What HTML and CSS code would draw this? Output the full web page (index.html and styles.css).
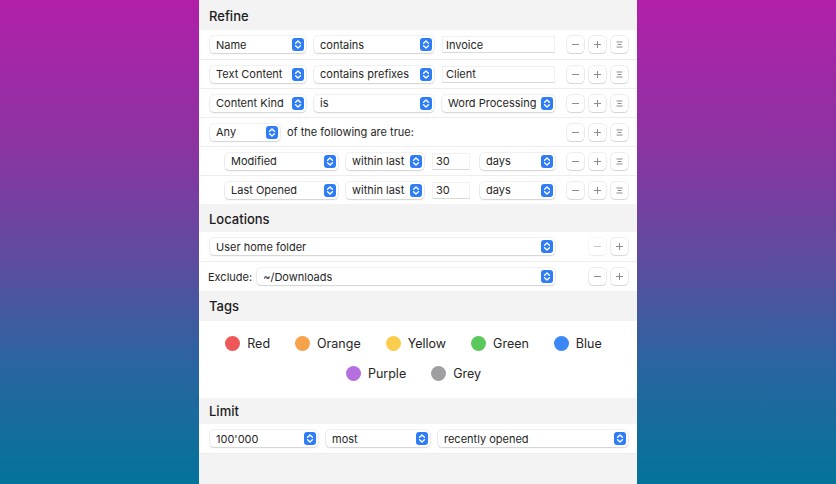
FILE: index.html
```html
<!DOCTYPE html>
<html>
<head>
<meta charset="utf-8">
<link rel="stylesheet" href="styles.css">
</head>
<body>
<svg width="0" height="0" class="defs">
  <defs>
    <symbol id="step" viewBox="0 0 12 13">
      <rect x="0" y="0" width="12" height="13" rx="3" fill="#2f7df6"/>
      <path d="M3.6 5.2 L6 2.9 L8.4 5.2 M3.6 7.8 L6 10.1 L8.4 7.8" fill="none" stroke="#fff" stroke-width="1.4" stroke-linecap="round" stroke-linejoin="round"/>
    </symbol>
    <symbol id="minus" viewBox="0 0 17 17"><path d="M5 8.5 H12" stroke="#8c8c8c" stroke-width="1"/></symbol>
    <symbol id="plus" viewBox="0 0 17 17"><path d="M5 8.5 H12 M8.5 5 V12" stroke="#8c8c8c" stroke-width="1"/></symbol>
    <symbol id="menu" viewBox="0 0 17 17"><path d="M5.5 6 H11.5 M6.5 8.5 H10.5 M5.5 11 H11.5" stroke="#8c8c8c" stroke-width="1"/></symbol>
  </defs>
</svg>
<div class="panel">
  <div class="head">Refine</div>
  <div class="row">
    <div class="fields">
      <div class="popup w96"><span>Name</span><svg class="st"><use href="#step"/></svg></div>
      <div class="popup w120"><span>contains</span><svg class="st"><use href="#step"/></svg></div>
      <div class="field w113">Invoice</div>
    </div>
    <div class="btns"><div class="btn"><svg><use href="#minus"/></svg></div><div class="btn"><svg><use href="#plus"/></svg></div><div class="btn"><svg><use href="#menu"/></svg></div></div>
  </div>
  <div class="row">
    <div class="fields">
      <div class="popup w96"><span>Text Content</span><svg class="st"><use href="#step"/></svg></div>
      <div class="popup w120"><span>contains prefixes</span><svg class="st"><use href="#step"/></svg></div>
      <div class="field w113">Client</div>
    </div>
    <div class="btns"><div class="btn"><svg><use href="#minus"/></svg></div><div class="btn"><svg><use href="#plus"/></svg></div><div class="btn"><svg><use href="#menu"/></svg></div></div>
  </div>
  <div class="row">
    <div class="fields">
      <div class="popup w96"><span>Content Kind</span><svg class="st"><use href="#step"/></svg></div>
      <div class="popup w120"><span>is</span><svg class="st"><use href="#step"/></svg></div>
      <div class="popup w113"><span>Word Processing</span><svg class="st"><use href="#step"/></svg></div>
    </div>
    <div class="btns"><div class="btn"><svg><use href="#minus"/></svg></div><div class="btn"><svg><use href="#plus"/></svg></div><div class="btn"><svg><use href="#menu"/></svg></div></div>
  </div>
  <div class="row">
    <div class="fields">
      <div class="popup w70"><span>Any</span><svg class="st"><use href="#step"/></svg></div>
      <span class="label">of the following are true:</span>
    </div>
    <div class="btns"><div class="btn"><svg><use href="#minus"/></svg></div><div class="btn"><svg><use href="#plus"/></svg></div><div class="btn"><svg><use href="#menu"/></svg></div></div>
  </div>
  <div class="row">
    <div class="fields sub">
      <div class="popup w113"><span>Modified</span><svg class="st"><use href="#step"/></svg></div>
      <div class="popup w78"><span>within last</span><svg class="st"><use href="#step"/></svg></div>
      <div class="field w38">30</div>
      <div class="popup w75 ml2"><span>days</span><svg class="st"><use href="#step"/></svg></div>
    </div>
    <div class="btns"><div class="btn"><svg><use href="#minus"/></svg></div><div class="btn"><svg><use href="#plus"/></svg></div><div class="btn"><svg><use href="#menu"/></svg></div></div>
  </div>
  <div class="row">
    <div class="fields sub">
      <div class="popup w113"><span>Last Opened</span><svg class="st"><use href="#step"/></svg></div>
      <div class="popup w78"><span>within last</span><svg class="st"><use href="#step"/></svg></div>
      <div class="field w38">30</div>
      <div class="popup w75 ml2"><span>days</span><svg class="st"><use href="#step"/></svg></div>
    </div>
    <div class="btns"><div class="btn"><svg><use href="#minus"/></svg></div><div class="btn"><svg><use href="#plus"/></svg></div><div class="btn"><svg><use href="#menu"/></svg></div></div>
  </div>

  <div class="head h28">Locations</div>
  <div class="row">
    <div class="fields">
      <div class="popup grow"><span>User home folder</span><svg class="st"><use href="#step"/></svg></div>
    </div>
    <div class="btns"><div class="btn off"><svg><use href="#minus"/></svg></div><div class="btn"><svg><use href="#plus"/></svg></div></div>
  </div>
  <div class="row r30">
    <div class="fields tight">
      <span class="label ex">Exclude:</span>
      <div class="popup grow"><span>~/Downloads</span><svg class="st"><use href="#step"/></svg></div>
    </div>
    <div class="btns"><div class="btn"><svg><use href="#minus"/></svg></div><div class="btn"><svg><use href="#plus"/></svg></div></div>
  </div>

  <div class="head flat">Tags</div>
  <div class="tags">
    <div class="tagrow">
      <div class="tag"><i class="dot red"></i>Red</div>
      <div class="tag"><i class="dot orange"></i>Orange</div>
      <div class="tag"><i class="dot yellow"></i>Yellow</div>
      <div class="tag"><i class="dot green"></i>Green</div>
      <div class="tag"><i class="dot blue"></i>Blue</div>
    </div>
    <div class="tagrow">
      <div class="tag"><i class="dot purple"></i>Purple</div>
      <div class="tag"><i class="dot grey"></i>Grey</div>
    </div>
  </div>

  <div class="head h26 flat">Limit</div>
  <div class="row limit">
    <div class="fields">
      <div class="popup w108"><span>100'000</span><svg class="st"><use href="#step"/></svg></div>
      <div class="popup w104"><span>most</span><svg class="st"><use href="#step"/></svg></div>
      <div class="popup grow"><span>recently opened</span><svg class="st"><use href="#step"/></svg></div>
    </div>
  </div>
  <div class="rest"></div>
</div>
</body>
</html>
```
FILE: styles.css
```css
html, body { margin: 0; padding: 0; height: 100%; }
body {
  background: linear-gradient(180deg, #b11fa9 0%, #8b33a1 30%, #5b4d9f 55%, #2a64a0 75%, #03739a 100%);
  display: flex;
  justify-content: center;
  font-family: "Inter", "Noto Sans", sans-serif;
  color: #262626;
  overflow: hidden;
}
.defs { position: absolute; }
.panel {
  width: 438px;
  height: 484px;
  background: #f3f3f3;
  display: flex;
  flex-direction: column;
}
.head {
  height: 30px;
  display: flex;
  align-items: center;
  padding-left: 10px;
  font-size: 13px;
  font-weight: 500;
  color: #1c1c1c;
  background: #f3f3f3;
  box-sizing: border-box;
  padding-top: 2px;
}
.head.flat { padding-top: 0; padding-bottom: 1px; }
.h28 { height: 28px; }
.h26 { height: 26px; }
.row {
  height: 29px;
  box-sizing: border-box;
  background: #fff;
  border-top: 1px solid #ededed;
  display: flex;
  align-items: center;
  padding: 0 9px 0 11px;
}
.head + .row { border-top: none; }
.r30 { height: 30px; }
.fields {
  flex: 1;
  display: flex;
  align-items: center;
  gap: 8px;
  min-width: 0;
}
.fields.sub { padding-left: 15px; }
.fields.tight { gap: 3px; margin-left: -1px; }
.btns {
  width: 62px;
  margin-left: 11px;
  display: flex;
  justify-content: flex-end;
  gap: 5px;
}
.btn {
  width: 17px;
  height: 17px;
  border-radius: 4px;
  background: #fff;
  box-shadow: 0 0 0 0.5px rgba(0,0,0,0.14), 0 1px 1px rgba(0,0,0,0.10);
}
.btn svg { width: 17px; height: 17px; display: block; }
.btn.off { opacity: 0.45; }
.popup {
  height: 17px;
  box-sizing: border-box;
  background: #fff;
  border-radius: 4px;
  box-shadow: 0 0 0 0.5px rgba(0,0,0,0.12), 0 1px 1.5px rgba(0,0,0,0.13);
  display: flex;
  align-items: center;
  justify-content: space-between;
  padding: 0 2px 0 6px;
  font-size: 11px;
  white-space: nowrap;
}
.st { width: 12px; height: 13px; flex: none; }
.field {
  height: 17px;
  box-sizing: border-box;
  border: 1px solid #f0f0f0;
  border-bottom-color: #d9d9d9;
  display: flex;
  align-items: center;
  padding-left: 3px;
  font-size: 11px;
  background: #fff;
}
.label { font-size: 11px; margin-left: -1px; }
.ex { margin-right: 2px; }
.grow { flex: 1; }
.w96 { width: 96px; }
.w120 { width: 120px; }
.w113 { width: 113px; }
.w70 { width: 70px; }
.w78 { width: 78px; }
.w38 { width: 38px; }
.w75 { width: 75px; }
.w108 { width: 108px; }
.w104 { width: 104px; }
.ml2 { margin-left: 2px; }
.limit { padding-right: 9px; }
.tags {
  height: 77px;
  background: #fff;
  display: flex;
  flex-direction: column;
  align-items: center;
  padding: 7px 9px 0 0;
  box-sizing: border-box;
}
.tagrow {
  height: 30px;
  display: flex;
  align-items: center;
  justify-content: center;
  gap: 25px;
}
.tag {
  display: flex;
  align-items: center;
  gap: 7px;
  font-size: 12.5px;
  color: #262626;
}
.dot {
  width: 15px;
  height: 15px;
  border-radius: 50%;
  display: block;
}
.red { background: #ef5858; }
.orange { background: #f6a24b; }
.yellow { background: #fbcd4e; }
.green { background: #5bc85c; }
.blue { background: #3b87f5; }
.purple { background: #b56fdf; }
.grey { background: #9f9fa1; }
.rest { flex: 1; background: #f3f3f3; border-top: 1px solid #ededed; }
```
